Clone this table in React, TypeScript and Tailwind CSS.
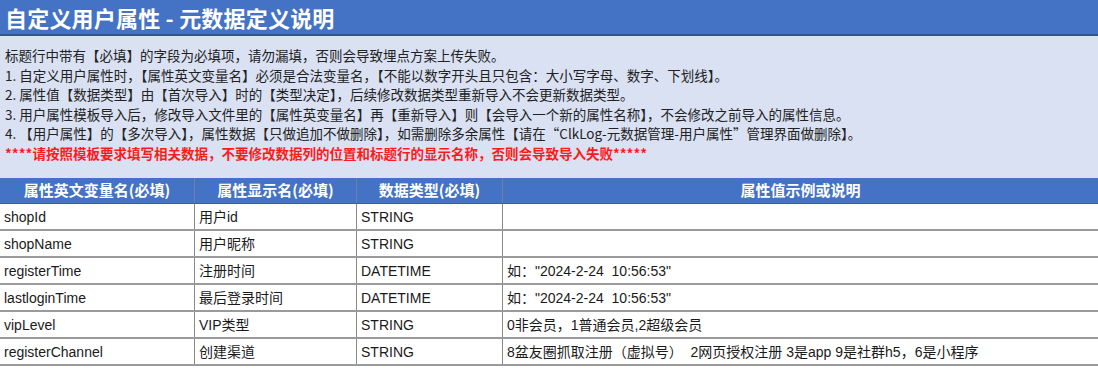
import React from "react";

const NOTES = [
  "标题行中带有【必填】的字段为必填项，请勿漏填，否则会导致埋点方案上传失败。",
  "1. 自定义用户属性时，【属性英文变量名】必须是合法变量名，【不能以数字开头且只包含：大小写字母、数字、下划线】。",
  "2. 属性值【数据类型】由【首次导入】时的【类型决定】，后续修改数据类型重新导入不会更新数据类型。",
  "3. 用户属性模板导入后，修改导入文件里的【属性英变量名】再【重新导入】则【会导入一个新的属性名称】，不会修改之前导入的属性信息。",
  "4. 【用户属性】的【多次导入】，属性数据【只做追加不做删除】，如需删除多余属性【请在“ClkLog-元数据管理-用户属性”管理界面做删除】。",
];

const HEADERS = ["属性英文变量名(必填)", "属性显示名(必填)", "数据类型(必填)", "属性值示例或说明"];

const ROWS = [
  ["shopId", "用户id", "STRING", ""],
  ["shopName", "用户昵称", "STRING", ""],
  ["registerTime", "注册时间", "DATETIME", "如：\"2024-2-24  10:56:53\""],
  ["lastloginTime", "最后登录时间", "DATETIME", "如：\"2024-2-24  10:56:53\""],
  ["vipLevel", "VIP类型", "STRING", "0非会员，1普通会员,2超级会员"],
  ["registerChannel", "创建渠道", "STRING", "8盆友圈抓取注册（虚拟号）  2网页授权注册 3是app 9是社群h5，6是小程序"],
];

const COLS = "grid grid-cols-[195px_162px_146px_1fr]";

export default function App() {
  return (
    <div className="w-[1098px] h-[368px] overflow-hidden bg-white font-['Liberation_Sans','Noto_Sans_CJK_SC',sans-serif]">
      <div className="h-[36px] bg-[#4472C4] border-b-2 border-[#2F5597] pl-[5px] flex items-center">
        <h1 className="text-white font-bold text-[22px] leading-none tracking-[0.2px] font-['Noto_Sans_CJK_SC',sans-serif]">
          自定义用户属性 - 元数据定义说明
        </h1>
      </div>

      <div className="h-[142px] bg-[#D9E1F2] pt-[10px] pl-[5px] text-[13.5px] leading-[19.6px] text-[#222] font-['Noto_Sans_CJK_SC',sans-serif] whitespace-nowrap">
        {NOTES.map((n) => (
          <p key={n}>{n}</p>
        ))}
        <p className="text-[#FF1A1A] font-bold">
          ****请按照模板要求填写相关数据，不要修改数据列的位置和标题行的显示名称，否则会导致导入失败*****
        </p>
      </div>

      <div className={`${COLS} h-[26px] bg-[#4472C4] border-b border-[#3A5E9E]`}>
        {HEADERS.map((h, i) => (
          <div
            key={h}
            className={`flex items-center justify-center text-white font-bold text-[15px] font-['Noto_Sans_CJK_SC',sans-serif] ${
              i < 3 ? "border-r border-[#6b7fa8]" : ""
            }`}
          >
            {h}
          </div>
        ))}
      </div>

      {ROWS.map((row) => (
        <div key={row[0]} className={`${COLS} h-[27px] border-b-2 border-[#9a9a9a] text-[14px] text-[#1a1a1a]`}>
          {row.map((cell, i) => (
            <div
              key={i}
              className={`flex items-center pl-[4px] pt-[2px] whitespace-pre ${i < 3 ? "border-r border-[#8a8a8a]" : ""}`}
            >
              {cell}
            </div>
          ))}
        </div>
      ))}
    </div>
  );
}
